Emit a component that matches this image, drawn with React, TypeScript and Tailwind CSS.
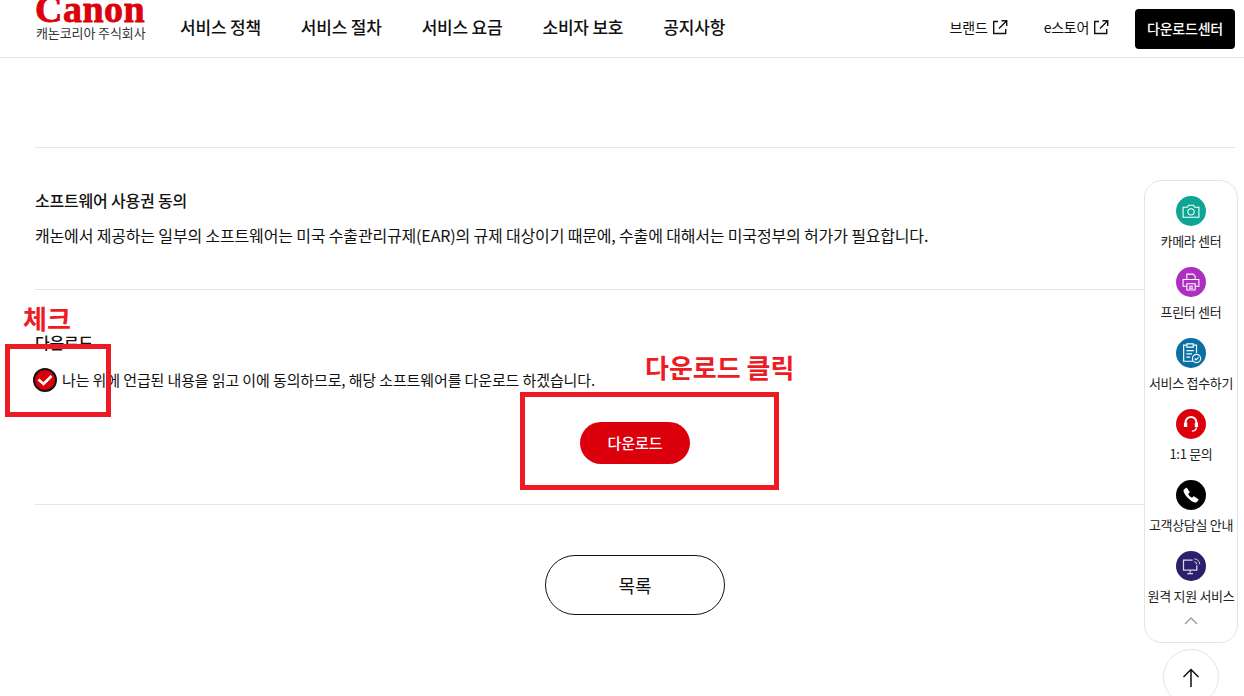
import React from "react";

const font = { fontFamily: '"Noto Sans CJK KR", "Noto Sans", sans-serif' };

function Ext() {
  return (
    <svg width="16" height="16" viewBox="0 0 16 16" fill="none" stroke="#111" strokeWidth="1.4">
      <path d="M6 2.500H1.700v12h12V10" />
      <path d="M7 9.500 14.500 2M9.500 1.700h5.200v5.200" />
    </svg>
  );
}

function Side({ bg, label, children }: { bg: string; label: string; children: React.ReactNode }) {
  return (
    <div className="flex flex-col items-center h-[71px]">
      <div className={`w-[30px] h-[30px] rounded-full flex items-center justify-center ${bg}`}>{children}</div>
      <div className="mt-[5px] text-[13px] leading-[20px] text-[#222] whitespace-nowrap tracking-[-0.3px]">{label}</div>
    </div>
  );
}

export default function App() {
  return (
    <div style={font} className="relative w-[1244px] h-[696px] overflow-hidden bg-white text-[#111]">
      <header className="h-[58px] border-b border-[#e6e6e6] flex items-center pl-[35px] pr-[9px]">
        <div className="w-[112px] h-[57px] relative overflow-hidden shrink-0">
          <div
            className="absolute left-0 top-[-10px] text-[#dc000c] text-[38px] leading-[38px] font-bold whitespace-nowrap tracking-[0.5px] [-webkit-text-stroke:0.8px_#dc000c]"
            style={{ fontFamily: '"Liberation Serif", serif' }}
          >
            Canon
          </div>
          <div className="absolute left-[1px] top-[24px] text-[13px] leading-[18px] text-[#333] whitespace-nowrap tracking-[-0.1px]">캐논코리아 주식회사</div>
        </div>
        <nav className="ml-[33px] flex gap-[40px] text-[17px] font-medium leading-[24px] pb-[4px] tracking-[-0.2px]">
          <span>서비스 정책</span>
          <span>서비스 절차</span>
          <span>서비스 요금</span>
          <span>소비자 보호</span>
          <span>공지사항</span>
        </nav>
        <div className="ml-auto flex items-center text-[14px]">
          <span className="flex items-center gap-[4px] pb-[3px] tracking-[-0.1px]">브랜드 <Ext /></span>
          <span className="flex items-center gap-[4px] ml-[36px] pb-[3px] tracking-[-0.3px]">e스토어 <Ext /></span>
          <button className="ml-[26px] w-[100px] h-[40px] rounded-[4px] bg-black text-white text-[14px] font-medium tracking-[-0.2px]">다운로드센터</button>
        </div>
      </header>

      <main className="pl-[35px] w-[1235px]">
        <div className="h-[89px]" />
        <section className="border-t border-[#e6e6e6] h-[142px] pt-[41px]">
          <h3 className="text-[16px] font-medium leading-[22px] tracking-[-0.2px]">소프트웨어 사용권 동의</h3>
          <p className="mt-[13px] text-[16px] leading-[22px] tracking-[-0.16px]">
            캐논에서 제공하는 일부의 소프트웨어는 미국 수출관리규제(EAR)의 규제 대상이기 때문에, 수출에 대해서는 미국정부의 허가가 필요합니다.
          </p>
        </section>
        <section className="border-t border-[#e6e6e6] h-[215px] pt-[41px]">
          <h3 className="text-[16px] font-medium leading-[22px] tracking-[-0.2px]">다운로드</h3>
          <label className="mt-[15px] flex items-center gap-[6px] text-[15px] leading-[22px] tracking-[-0.12px]">
            <svg width="24" height="24" viewBox="0 0 24 24" className="-ml-[2px] -mr-[1px]">
              <circle cx="12" cy="12" r="11" fill="#dc000c" stroke="#111" strokeWidth="2" />
              <path d="M5.500 11.500 10.500 16 18.500 8" fill="none" stroke="#fff" strokeWidth="2.600" />
            </svg>
            나는 위에 언급된 내용을 읽고 이에 동의하므로, 해당 소프트웨어를 다운로드 하겠습니다.
          </label>
          <div className="mt-[30px] flex justify-center">
            <button className="w-[110px] h-[42px] rounded-full bg-[#dc000c] text-white text-[15px] font-medium">다운로드</button>
          </div>
        </section>
        <section className="border-t border-[#e6e6e6] pt-[50px] flex justify-center">
          <button className="w-[180px] h-[60px] rounded-full border border-[#111] bg-white text-[18px] font-normal">목록</button>
        </section>
      </main>

      {/* red annotations */}
      <div className="absolute left-[5px] top-[344px] w-[106px] h-[73px] border-[5px] border-[#ed1c24]" />
      <div className="absolute left-[23px] top-[301px] text-[26px] leading-[34px] font-bold text-[#ed1c24]">체크</div>
      <div className="absolute left-[520px] top-[392px] w-[259px] h-[98px] border-[5px] border-[#ed1c24]" />
      <div className="absolute left-[645px] top-[350px] text-[26px] leading-[34px] font-bold text-[#ed1c24] whitespace-nowrap">다운로드 클릭</div>

      {/* floating quick menu */}
      <aside className="absolute left-[1144px] top-[180px] w-[94px] h-[463px] rounded-[18px] border border-[#e4e4e4] bg-white pt-[15px] flex flex-col items-center">
        <Side bg="bg-[#0fa595]" label="카메라 센터">
          <svg width="20" height="20" viewBox="0 0 24 24" fill="none" stroke="#fff" strokeWidth="1.3">
            <path d="M2.500 7.500h5l1.500-2.500h6l1.500 2.500h5v12h-19z" />
            <circle cx="12" cy="13" r="3.800" />
          </svg>
        </Side>
        <Side bg="bg-[#ad2fc0]" label="프린터 센터">
          <svg width="20" height="20" viewBox="0 0 24 24" fill="none" stroke="#fff" strokeWidth="1.3">
            <path d="M7 9V2.500h7.500L17 5v4M7 17H2.500V9h19v8H17" />
            <path d="M7 14h10v7.500H7zM9.500 17h5M9.500 19.300h5" />
          </svg>
        </Side>
        <Side bg="bg-[#0c6fa3]" label="서비스 접수하기">
          <svg width="22" height="22" viewBox="0 0 24 24" fill="none" stroke="#fff" strokeWidth="1.3">
            <path d="M14.500 21H4V3.500h3M15 3.500h3V12" />
            <path d="M7.500 2h7v3.500h-7zM7 9.500h8M7 13h6M7 16.500h4" />
            <circle cx="18" cy="18" r="4.500" />
            <path d="m16 18 1.500 1.500 2.700-2.700" />
          </svg>
        </Side>
        <Side bg="bg-[#dc000c]" label="1:1 문의">
          <svg width="20" height="20" viewBox="0 0 24 24" fill="none" stroke="#fff" strokeWidth="2.400">
            <path d="M5.500 15V10a6.500 6.500 0 0 1 13 0v5" />
            <path d="M5.500 10.500v5M18.500 10.500v5" strokeWidth="4" />
            <path d="M18.500 16c0 3-2 4.500-5.500 4.500" strokeWidth="1.600" />
          </svg>
        </Side>
        <Side bg="bg-black" label="고객상담실 안내">
          <svg width="18" height="18" viewBox="0 0 24 24" fill="#fff">
            <path d="M6.600 2.500 10 7.600c.3.5.2 1.100-.2 1.500L8.200 10.700c1.200 2.300 2.900 4 5.100 5.100l1.600-1.600c.4-.4 1-.5 1.500-.2l5.100 3.400c.5.300.6 1 .2 1.500l-2 2.400c-.5.600-1.300.9-2.100.7C11 20.300 3.700 13 2 6.600c-.2-.8.100-1.600.7-2.100l2.400-2c.5-.4 1.200-.3 1.500 0z" />
          </svg>
        </Side>
        <Side bg="bg-[#2d1f6b]" label="원격 지원 서비스">
          <svg width="20" height="20" viewBox="0 0 24 24" fill="none" stroke="#d8d8e8" strokeWidth="1.500">
            <path d="M14 5H3v12h16V11" />
            <path d="M11 17v3M7.500 21h7" />
            <path d="M16 7a3 3 0 0 1 3 3M16 3.500A6.500 6.500 0 0 1 22.500 10" strokeWidth="1.200" />
          </svg>
        </Side>
        <svg width="16" height="10" viewBox="0 0 16 10" fill="none" stroke="#999" strokeWidth="1.300" className="mt-[-6px]">
          <path d="M2 8 8 2l6 6" />
        </svg>
      </aside>
      <div className="absolute left-[1163px] top-[649px] w-[56px] h-[56px] rounded-full border border-[#e4e4e4] bg-white flex items-start justify-center pt-[18px]">
        <svg width="18" height="20" viewBox="0 0 18 20" fill="none" stroke="#111" strokeWidth="1.500">
          <path d="M9 19V1.500M1.500 9 9 1.500 16.500 9" />
        </svg>
      </div>
    </div>
  );
}
